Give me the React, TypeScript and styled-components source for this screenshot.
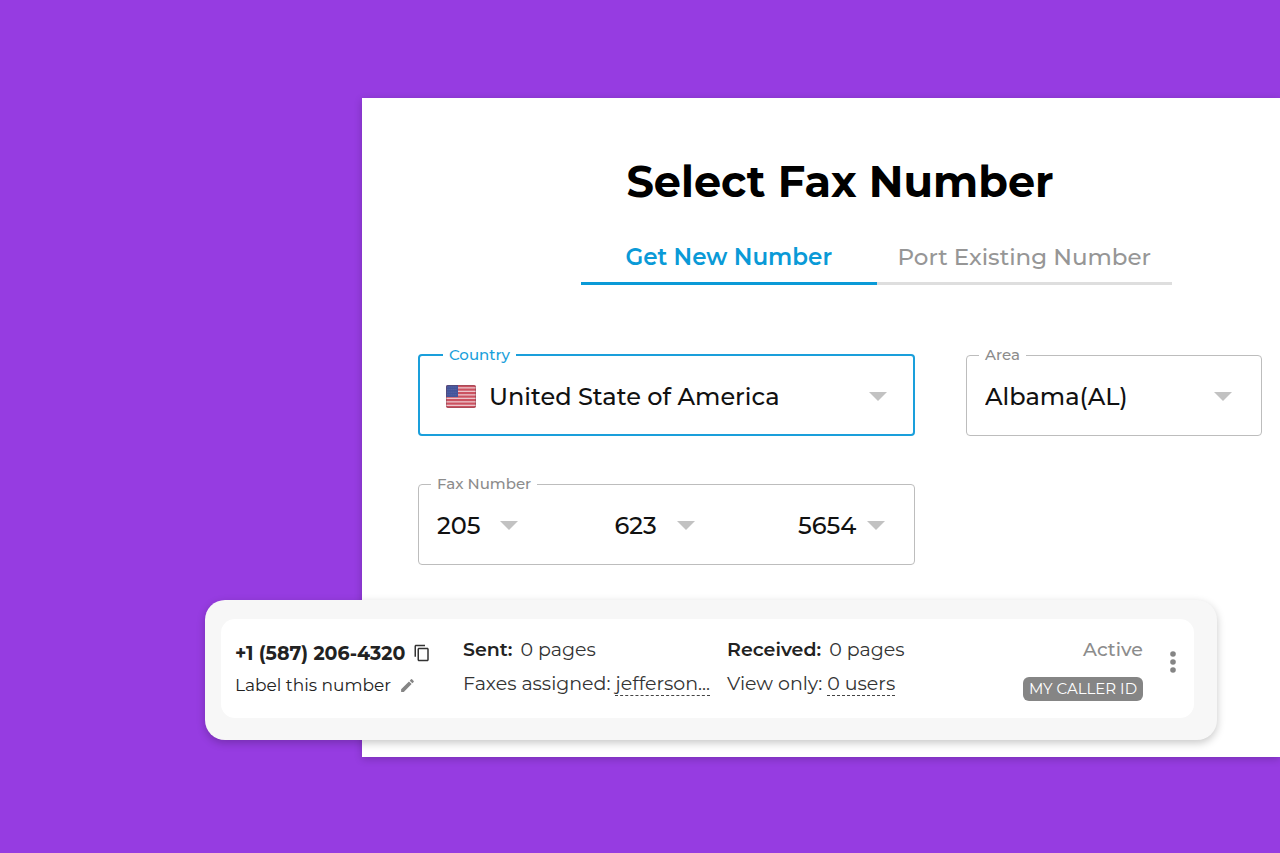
import React from "react";
import styled, { createGlobalStyle } from "styled-components";

const GlobalStyle = createGlobalStyle`
  *, *::before, *::after { box-sizing: border-box; }
  body {
    margin: 0;
    background: #963ce1;
    font-family: Montserrat, Inter, "Liberation Sans", sans-serif;
    color: #222;
  }
  button, select { font-family: inherit; }
`;

const Page = styled.main`
  min-height: 100vh;
  padding: 98px 0 96px 362px;
  background: #963ce1;
  overflow: hidden;
`;

const Panel = styled.section`
  position: relative;
  min-height: 659px;
  padding: 56px 18px 192px 56px;
  background: #fff;
  box-shadow: 0 2px 8px rgba(0, 0, 0, 0.2);
`;

const Title = styled.h1`
  margin: 0;
  font-size: 43px;
  line-height: 56px;
  font-weight: 700;
  text-align: center;
  color: #000;
`;

const Tabs = styled.div`
  display: grid;
  grid-template-columns: 1fr 1fr;
  align-items: end;
  margin: 22px 90px 0 163px;
`;

const Tab = styled.button<{ $active?: boolean }>`
  height: 53px;
  padding: 0;
  border: 0;
  border-bottom: 3px solid ${(p) => (p.$active ? "#0a9ad7" : "#dedede")};
  background: none;
  font-size: 23px;
  line-height: 32px;
  font-weight: ${(p) => (p.$active ? 600 : 500)};
  color: ${(p) => (p.$active ? "#0a9ad7" : "#969696")};
  white-space: nowrap;
`;

const Form = styled.form`
  display: grid;
  grid-template-columns: minmax(0, 497fr) minmax(0, 296fr);
  gap: 39px 51px;
  margin-top: 61px;
`;

const Field = styled.fieldset<{ $active?: boolean }>`
  min-width: 0;
  height: 90px;
  margin: 0;
  padding: 0 ${(p) => (p.$active ? 26 : 29)}px 8px ${(p) => (p.$active ? 26 : 18)}px;
  border: ${(p) => (p.$active ? "2px solid #1a9fdb" : "1px solid #bdbdbd")};
  border-radius: 4px;
  color: ${(p) => (p.$active ? "#1a9fdb" : "#8c8c8c")};
`;

const Legend = styled.legend<{ $active?: boolean }>`
  margin-left: ${(p) => (p.$active ? -3 : -6)}px;
  padding: 0 6px;
  font-size: 15px;
  line-height: 18px;
  font-weight: 500;
`;

const Control = styled.div`
  display: flex;
  align-items: center;
  height: 64px;
`;

const Numbers = styled.div`
  display: grid;
  grid-template-columns: 177fr 183fr 86fr;
`;

const Select = styled.select<{ $width?: number }>`
  flex: ${(p) => (p.$width ? `0 0 ${p.$width}px` : "1 1 0")};
  width: ${(p) => (p.$width ? `${p.$width}px` : "auto")};
  min-width: 0;
  height: 40px;
  padding: 0;
  border: 0;
  outline: 0;
  appearance: none;
  background: none;
  font-size: 24px;
  font-weight: 500;
  color: #111;
`;

const FlagIcon = styled.svg`
  flex: none;
  width: 30px;
  height: 23px;
  margin-right: 13px;
`;

const ArrowIcon = styled.svg`
  flex: none;
  width: 18px;
  height: 9px;
  fill: #c2c2c2;
`;

const NumberCard = styled.article`
  position: absolute;
  left: -157px;
  right: 63px;
  bottom: 17px;
  padding: 19px 23px 22px 16px;
  border-radius: 20px;
  background: #f7f7f7;
  box-shadow: 0 3px 8px rgba(0, 0, 0, 0.22);
`;

const CardBody = styled.div`
  display: flex;
  align-items: flex-start;
  padding: 14px 6px 17px 14px;
  border-radius: 14px;
  background: #fff;
`;

const Columns = styled.div`
  flex: 1;
  display: grid;
  grid-template-columns: minmax(0, 228fr) minmax(0, 264fr) minmax(0, 296fr) 120px;
  white-space: nowrap;
`;

const Identity = styled.div`
  padding-top: 4px;
`;

const IdentityRow = styled.div`
  display: flex;
  align-items: center;
  gap: 8px;
  height: 32px;
  font-size: 17px;
`;

const Phone = styled.strong`
  font-size: 19px;
  font-weight: 700;
`;

const IconButton = styled.button`
  display: flex;
  padding: 0;
  border: 0;
  background: none;
  color: #333;
`;

const Stat = styled.div`
  height: 34px;
  font-size: 19px;
  line-height: 34px;
  color: #333;
`;

const StatName = styled.strong`
  margin-right: 8px;
  font-weight: 600;
  color: #222;
`;

const DashedLink = styled.a`
  display: inline-block;
  border-bottom: 1px dashed #444;
  line-height: 23px;
  color: inherit;
  text-decoration: none;
`;

const Status = styled.div`
  display: flex;
  flex-direction: column;
  align-items: flex-end;
  gap: 10px;
`;

const Active = styled.span`
  font-size: 19px;
  line-height: 34px;
  font-weight: 500;
  color: #8c8c8c;
`;

const Badge = styled.span`
  width: 120px;
  border-radius: 6px;
  background: #858585;
  color: #fff;
  font-size: 15px;
  line-height: 24px;
  text-align: center;
`;

const MenuButton = styled(IconButton)`
  justify-content: center;
  width: 30px;
  margin: 18px 0 0 15px;
  color: #858585;
`;

const Arrow = () => (
  <ArrowIcon viewBox="0 0 18 9" aria-hidden="true">
    <path d="M0 0h18L9 9z" />
  </ArrowIcon>
);

const Flag = () => (
  <FlagIcon viewBox="0 0 30 23" aria-hidden="true">
    <defs>
      <clipPath id="flag-shape">
        <rect width="30" height="23" rx="2" />
      </clipPath>
    </defs>
    <g clipPath="url(#flag-shape)">
      <rect width="30" height="23" fill="#ecc5cb" />
      {[0, 3.5, 7, 10.5, 14, 17.5, 21].map((y) => (
        <rect key={y} y={y} width="30" height="2.2" fill="#cb5260" />
      ))}
      <rect width="12" height="12" fill="#44549a" />
      {[2, 4.6, 7.2, 9.8].map((y) => (
        <path key={y} d={`M1.5 ${y}h9.5`} stroke="#7080b8" strokeWidth=".7" strokeDasharray=".8 1.2" />
      ))}
    </g>
    <rect x=".5" y=".5" width="29" height="22" rx="2" fill="none" stroke="#6b3b4a" strokeOpacity=".35" />
  </FlagIcon>
);

export default function App() {
  return (
    <>
      <GlobalStyle />
      <Page>
        <Panel>
          <Title>Select Fax Number</Title>
          <Tabs role="tablist">
            <Tab type="button" role="tab" aria-selected="true" $active>
              Get New Number
            </Tab>
            <Tab type="button" role="tab" aria-selected="false">
              Port Existing Number
            </Tab>
          </Tabs>
          <Form>
            <Field $active>
              <Legend $active>
                <label htmlFor="country">Country</label>
              </Legend>
              <Control>
                <Flag />
                <Select id="country">
                  <option>United State of America</option>
                </Select>
                <Arrow />
              </Control>
            </Field>
            <Field>
              <Legend>
                <label htmlFor="area">Area</label>
              </Legend>
              <Control>
                <Select id="area">
                  <option>Albama(AL)</option>
                </Select>
                <Arrow />
              </Control>
            </Field>
            <Field>
              <Legend>
                <label htmlFor="area-code">Fax Number</label>
              </Legend>
              <Numbers>
                <Control>
                  <Select id="area-code" $width={63}>
                    <option>205</option>
                  </Select>
                  <Arrow />
                </Control>
                <Control>
                  <Select aria-label="Exchange" $width={63}>
                    <option>623</option>
                  </Select>
                  <Arrow />
                </Control>
                <Control>
                  <Select aria-label="Line number" $width={69}>
                    <option>5654</option>
                  </Select>
                  <Arrow />
                </Control>
              </Numbers>
            </Field>
          </Form>

          <NumberCard>
            <CardBody>
              <Columns>
                <Identity>
                  <IdentityRow>
                    <Phone>+1 (587) 206-4320</Phone>
                    <IconButton type="button" aria-label="Copy number">
                      <svg width="18" height="18" viewBox="0 0 24 24" fill="currentColor">
                        <path d="M16 1H4c-1.1 0-2 .9-2 2v14h2V3h12V1zm3 4H8c-1.1 0-2 .9-2 2v14c0 1.1.9 2 2 2h11c1.1 0 2-.9 2-2V7c0-1.1-.9-2-2-2zm0 16H8V7h11v14z" />
                      </svg>
                    </IconButton>
                  </IdentityRow>
                  <IdentityRow>
                    <span>Label this number</span>
                    <IconButton type="button" aria-label="Edit label">
                      <svg width="17" height="17" viewBox="0 0 24 24" fill="#858585">
                        <path d="M3 17.25V21h3.75L17.81 9.94l-3.75-3.75L3 17.25zM20.71 7.04a1 1 0 0 0 0-1.41l-2.34-2.34a1 1 0 0 0-1.41 0l-1.83 1.83 3.75 3.75 1.83-1.83z" />
                      </svg>
                    </IconButton>
                  </IdentityRow>
                </Identity>
                <div>
                  <Stat>
                    <StatName>Sent:</StatName>0 pages
                  </Stat>
                  <Stat>
                    Faxes assigned: <DashedLink href="#assigned">jefferson...</DashedLink>
                  </Stat>
                </div>
                <div>
                  <Stat>
                    <StatName>Received:</StatName>0 pages
                  </Stat>
                  <Stat>
                    View only: <DashedLink href="#viewers">0 users</DashedLink>
                  </Stat>
                </div>
                <Status>
                  <Active>Active</Active>
                  <Badge>MY CALLER ID</Badge>
                </Status>
              </Columns>
              <MenuButton type="button" aria-label="More options">
                <svg width="6" height="22" viewBox="0 0 6 22" fill="currentColor">
                  <circle cx="3" cy="3" r="2.8" />
                  <circle cx="3" cy="11" r="2.8" />
                  <circle cx="3" cy="19" r="2.8" />
                </svg>
              </MenuButton>
            </CardBody>
          </NumberCard>
        </Panel>
      </Page>
    </>
  );
}
